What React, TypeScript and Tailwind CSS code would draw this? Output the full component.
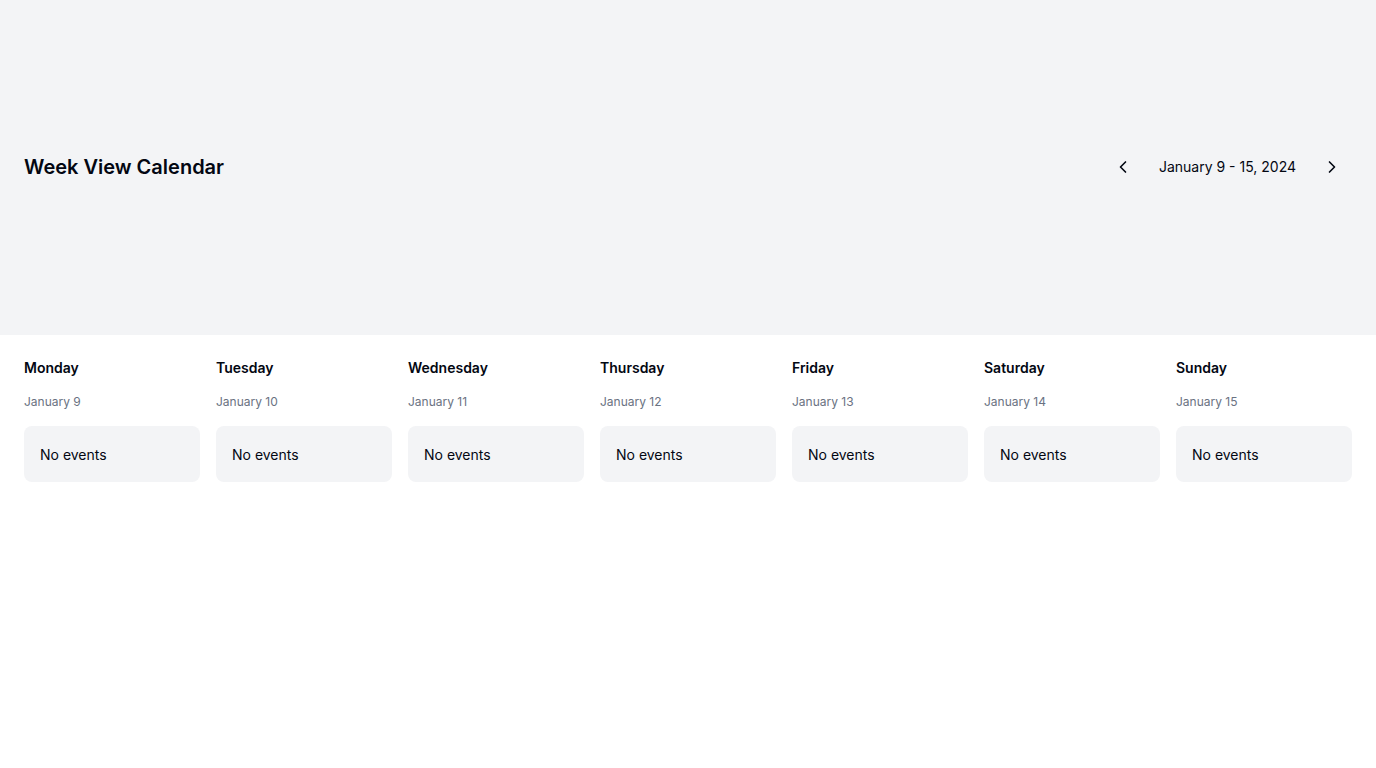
import { ChevronLeft, ChevronRight } from 'lucide-react'

const days = [
  { name: 'Monday', date: 'January 9' },
  { name: 'Tuesday', date: 'January 10' },
  { name: 'Wednesday', date: 'January 11' },
  { name: 'Thursday', date: 'January 12' },
  { name: 'Friday', date: 'January 13' },
  { name: 'Saturday', date: 'January 14' },
  { name: 'Sunday', date: 'January 15' },
]

const App = () => {
  return (
    <div className="min-h-screen bg-white text-gray-950 font-['Inter',sans-serif]">
      <header className="h-[335px] bg-gray-100 flex items-center justify-between px-6">
        <h1 className="text-xl font-semibold -mt-px">Week View Calendar</h1>
        <div className="flex items-center gap-[18px] -mt-px">
          <button className="p-2 text-gray-950">
            <ChevronLeft size={20} />
          </button>
          <span className="text-sm">January 9 - 15, 2024</span>
          <button className="p-2 mr-[2px] text-gray-950">
            <ChevronRight size={20} />
          </button>
        </div>
      </header>
      <main className="grid grid-cols-7 gap-4 px-6 pt-[23px]">
        {days.map((d) => (
          <div key={d.name} className="flex flex-col">
            <h2 className="text-sm font-semibold leading-5">{d.name}</h2>
            <p className="mt-4 text-xs text-gray-500 leading-4">{d.date}</p>
            <div className="mt-4 bg-gray-100 rounded-lg px-4 pt-[19px] pb-[17px] text-sm leading-5">No events</div>
          </div>
        ))}
      </main>
    </div>
  )
}

export default App
